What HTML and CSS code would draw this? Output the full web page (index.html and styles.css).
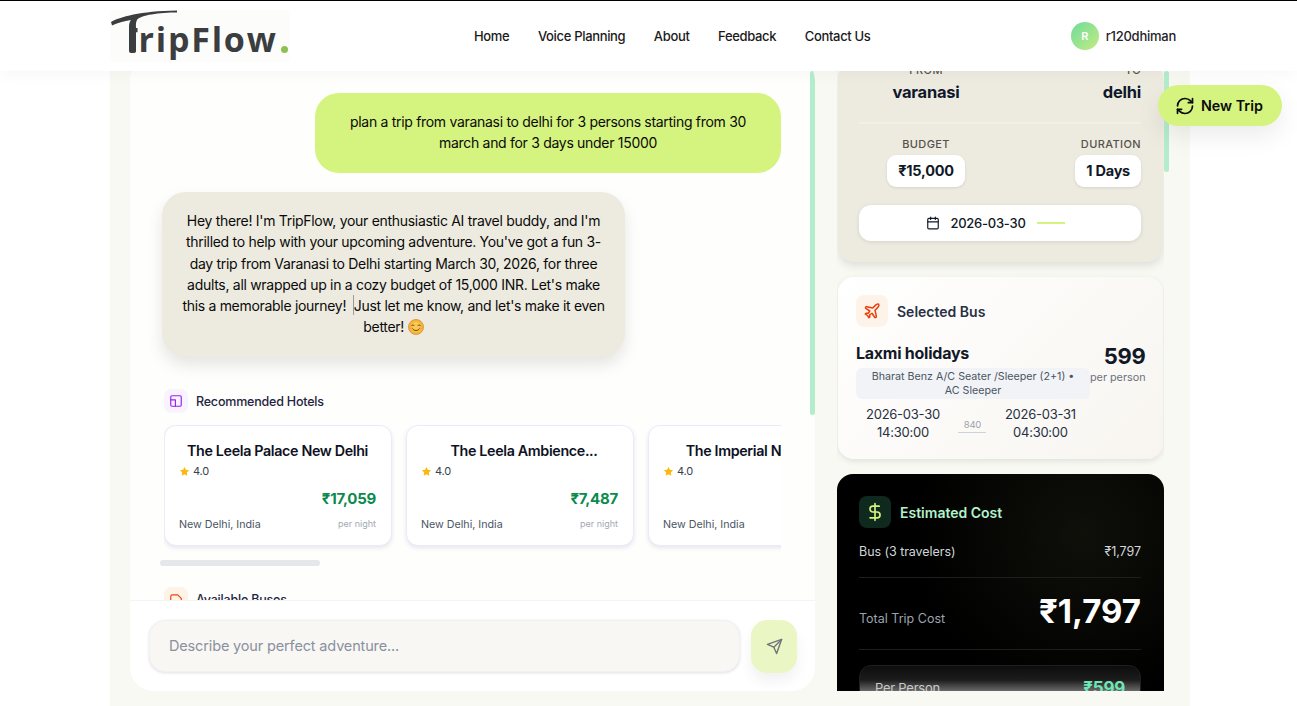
FILE: index.html
```html
<!DOCTYPE html>
<html lang="en">
<head>
<meta charset="UTF-8">
<meta name="viewport" content="width=device-width, initial-scale=1.0">
<title>TripFlow</title>
<link rel="stylesheet" href="styles.css">
</head>
<body>
  <header class="topbar">
    <a class="logo" href="#">
      <svg class="logo-swoosh" viewBox="0 0 70 45"><path d="M1 12C10 7 30 1 67 .5L67 2.5C50 2.5 30 5 27 10C25.5 12.5 26 16 26 18L26 41Q26 43 24 43L21 43Q19 43 19 41L19 17C19 13 20 11 21 10C14 11 7 13 2 15.5Z"/></svg>
      <span class="logo-text"><span class="logo-t">T</span>ripFlow</span><span class="logo-dot"></span>
    </a>
    <nav class="nav">
      <a href="#">Home</a>
      <a href="#">Voice Planning</a>
      <a href="#">About</a>
      <a href="#">Feedback</a>
      <a href="#">Contact Us</a>
    </nav>
    <div class="user">
      <span class="avatar">R</span>
      <span class="username">r120dhiman</span>
    </div>
  </header>

  <button class="new-trip">
    <svg class="icon" width="20" height="20" viewBox="0 0 24 24"><path d="M3 12a9 9 0 0 1 9-9 9.75 9.75 0 0 1 6.74 2.74L21 8"/><path d="M21 3v5h-5"/><path d="M21 12a9 9 0 0 1-9 9 9.75 9.75 0 0 1-6.74-2.74L3 16"/><path d="M8 16H3v5"/></svg>
    New Trip
  </button>

  <main class="page">
    <section class="chat">
      <div class="chat-scroll">
        <div class="msg msg-user">plan a trip from varanasi to delhi for 3 persons starting from 30 march and for 3 days under 15000</div>
        <div class="msg msg-ai">Hey there! I'm TripFlow, your enthusiastic AI travel buddy, and I'm thrilled to help with your upcoming adventure. You've got a fun 3-day trip from Varanasi to Delhi starting March 30, 2026, for three adults, all wrapped up in a cozy budget of 15,000 INR. Let's make this a memorable journey! <span class="cursor"></span>Just let me know, and let's make it even better!
          <svg class="emoji" viewBox="0 0 16 16"><circle cx="8" cy="8" r="7.5" fill="#f6b53c" stroke="#d98a1f" stroke-width=".8"/><circle cx="8" cy="8" r="5" fill="#fbc94f"/><path d="M3.6 6.6c.6-1 1.9-1 2.5 0M9.9 6.6c.6-1 1.9-1 2.5 0" fill="none" stroke="#5b3410" stroke-width=".9" stroke-linecap="round"/><path d="M4.2 9.4c1.6 2.9 6 2.9 7.6 0" fill="none" stroke="#5b3410" stroke-width=".9" stroke-linecap="round"/><circle cx="3.6" cy="9" r="1.2" fill="#f59a6a" opacity=".7"/><circle cx="12.4" cy="9" r="1.2" fill="#f59a6a" opacity=".7"/></svg>
        </div>

        <div class="section-head">
          <span class="section-icon section-icon-purple">
            <svg class="icon" width="14" height="14" viewBox="0 0 24 24"><rect x="3" y="3" width="18" height="18" rx="2"/><path d="M3 10h8v11"/></svg>
          </span>
          Recommended Hotels
        </div>

        <div class="hotels">
          <article class="hotel">
            <h3>The Leela Palace New Delhi</h3>
            <div class="rating"><svg width="11" height="11" viewBox="0 0 24 24"><polygon points="12 2 15.09 8.26 22 9.27 17 14.14 18.18 21.02 12 17.77 5.82 21.02 7 14.14 2 9.27 8.91 8.26 12 2"/></svg>4.0</div>
            <div class="hotel-price">₹17,059</div>
            <div class="hotel-foot"><span>New Delhi, India</span><small>per night</small></div>
          </article>
          <article class="hotel">
            <h3 class="hotel-cut">The Leela Ambience...</h3>
            <div class="rating"><svg width="11" height="11" viewBox="0 0 24 24"><polygon points="12 2 15.09 8.26 22 9.27 17 14.14 18.18 21.02 12 17.77 5.82 21.02 7 14.14 2 9.27 8.91 8.26 12 2"/></svg>4.0</div>
            <div class="hotel-price">₹7,487</div>
            <div class="hotel-foot"><span>New Delhi, India</span><small>per night</small></div>
          </article>
          <article class="hotel">
            <h3>The Imperial New Delhi</h3>
            <div class="rating"><svg width="11" height="11" viewBox="0 0 24 24"><polygon points="12 2 15.09 8.26 22 9.27 17 14.14 18.18 21.02 12 17.77 5.82 21.02 7 14.14 2 9.27 8.91 8.26 12 2"/></svg>4.0</div>
            <div class="hotel-price">₹9,200</div>
            <div class="hotel-foot"><span>New Delhi, India</span><small>per night</small></div>
          </article>
        </div>
        <div class="hotels-bar"></div>

        <div class="section-head section-head-buses">
          <span class="section-icon section-icon-orange">
            <svg class="icon" width="14" height="14" viewBox="0 0 24 24"><path d="M3 19V8a3 3 0 0 1 3-3h9l6 6v8"/></svg>
          </span>
          Available Buses
        </div>
      </div>

      <form class="composer">
        <input class="composer-input" type="text" placeholder="Describe your perfect adventure...">
        <button class="composer-send" type="button">
          <svg class="icon" width="17" height="17" viewBox="0 0 24 24"><path d="m22 2-7 20-4-9-9-4Z"/><path d="M22 2 11 13"/></svg>
        </button>
      </form>
      <span class="scroll-thumb scroll-thumb-chat"></span>
    </section>

    <aside class="side">
      <div class="side-scroll">
        <div class="card card-route">
          <div class="route-row">
            <div class="route-col route-center"><label>FROM</label><strong>varanasi</strong></div>
            <div class="route-col route-end"><label>TO</label><strong>delhi</strong></div>
          </div>
          <div class="route-row route-row-stats">
            <div class="route-col route-center"><label>BUDGET</label><b class="stat">₹15,000</b></div>
            <div class="route-col route-end"><label>DURATION</label><b class="stat">1 Days</b></div>
          </div>
          <div class="date-bar">
            <svg class="icon" width="14" height="14" viewBox="0 0 24 24"><path d="M8 2v4"/><path d="M16 2v4"/><rect x="3" y="4" width="18" height="18" rx="2"/><path d="M3 10h18"/></svg>
            <span>2026-03-30</span>
            <i class="date-line"></i>
          </div>
        </div>

        <div class="card card-bus">
          <div class="bus-head">
            <span class="bus-icon">
              <svg class="icon" width="18" height="18" viewBox="0 0 24 24"><path d="M17.8 19.2 16 11l3.5-3.5C21 6 21.5 4 21 3c-1-.5-3 0-4.5 1.5L13 8 4.8 6.2c-.5-.1-.9.1-1.1.5l-.3.5c-.2.5-.1 1 .3 1.3L9 12l-2 3H4l-1 1 3 2 2 3 1-1v-3l3-2 3.5 5.3c.3.4.8.5 1.3.3l.5-.2c.4-.3.6-.7.5-1.2z"/></svg>
            </span>
            Selected Bus
          </div>
          <div class="bus-body">
            <div class="bus-info">
              <div class="bus-name">Laxmi holidays</div>
              <div class="bus-type">Bharat Benz A/C Seater /Sleeper (2+1) • AC Sleeper</div>
            </div>
            <div class="bus-price"><b>599</b><span>per person</span></div>
          </div>
          <div class="bus-times">
            <div>2026-03-30<br>14:30:00</div>
            <div class="bus-duration">840</div>
            <div>2026-03-31<br>04:30:00</div>
          </div>
        </div>

        <div class="card card-cost">
          <div class="cost-head">
            <span class="cost-icon">
              <svg class="icon" width="20" height="20" viewBox="0 0 24 24"><line x1="12" y1="2" x2="12" y2="22"/><path d="M17 5H9.5a3.5 3.5 0 0 0 0 7h5a3.5 3.5 0 0 1 0 7H6"/></svg>
            </span>
            Estimated Cost
          </div>
          <div class="cost-row"><span>Bus (3 travelers)</span><span>₹1,797</span></div>
          <div class="cost-total"><span>Total Trip Cost</span><b>₹1,797</b></div>
          <div class="cost-person"><span>Per Person</span><b>₹599</b></div>
        </div>
      </div>
      <span class="scroll-thumb scroll-thumb-side"></span>
    </aside>
  </main>
</body>
</html>
```

FILE: styles.css
```css
* {
  box-sizing: border-box;
}
html, body {
  height: 100%;
}
body {
  margin: 0;
  height: 706px;
  overflow: hidden;
  background-color: #ffffff;
  font-family: Inter, "Liberation Sans", Arial, sans-serif;
  letter-spacing: -0.25px;
  color: #111827;
}
.icon {
  fill: none;
  stroke: currentColor;
  stroke-width: 2;
  stroke-linecap: round;
  stroke-linejoin: round;
  flex-shrink: 0;
}

/* header */
.topbar {
  position: relative;
  z-index: 5;
  display: flex;
  align-items: center;
  height: 71px;
  padding: 0 121px 0 110px;
  background-color: #ffffff;
  border-top: 1px solid #000000;
  box-shadow: 0 4px 14px rgba(0, 0, 0, 0.03);
}
.logo {
  position: relative;
  display: flex;
  align-items: flex-end;
  flex: 0 0 180px;
  height: 52px;
  padding: 0 0 0 13px;
  background-color: #fcfcfa;
  color: #3b3d3f;
  text-decoration: none;
}
.logo-swoosh {
  position: absolute;
  left: 0;
  top: 0;
  width: 70px;
  height: 45px;
  fill: #3b3d3f;
}
.logo-text {
  font-family: "Open Sans", Lato, sans-serif;
  font-size: 34px;
  font-weight: 700;
  line-height: 45px;
  letter-spacing: 1.8px;
  white-space: nowrap;
}
.logo-t {
  display: inline-block;
  margin-right: -6px;
  clip-path: inset(0 7px 0 7px);
}
.logo-dot {
  flex: none;
  width: 7px;
  height: 7px;
  margin: 0 0 9px 3px;
  border-radius: 50%;
  background-color: #8cc152;
}
.nav {
  display: flex;
  gap: 28.5px;
  margin-left: 184px;
}
.nav a {
  color: #1a1a1a;
  font-size: 13px;
  font-weight: 500;
  letter-spacing: -0.33px;
  text-decoration: none;
}
.user {
  display: flex;
  align-items: center;
  gap: 7px;
  margin-left: auto;
}
.avatar {
  display: flex;
  align-items: center;
  justify-content: center;
  width: 28px;
  height: 28px;
  border-radius: 50%;
  background: linear-gradient(135deg, #6edb9c, #c4ec80);
  color: #ffffff;
  font-size: 11px;
  font-weight: 600;
}
.username {
  color: #1f2328;
  font-size: 13px;
  font-weight: 500;
}

/* floating button */
.new-trip {
  position: absolute;
  z-index: 6;
  left: 1158px;
  top: 85px;
  display: flex;
  align-items: center;
  gap: 6px;
  width: 124px;
  height: 41px;
  padding: 0 0 0 17px;
  border: none;
  border-radius: 21px;
  background-color: #d5f37f;
  box-shadow: 0 10px 24px rgba(0, 0, 0, 0.08);
  color: #0b0b0b;
  font-family: inherit;
  font-size: 14.3px;
  font-weight: 600;
  letter-spacing: 0;
}

/* page */
.page {
  display: flex;
  gap: 22px;
  width: 1080px;
  height: 635px;
  margin-left: 110px;
  padding: 0 0 15px 20px;
  background-color: #f9f9f3;
}

/* chat column */
.chat {
  position: relative;
  display: flex;
  flex-direction: column;
  width: 685px;
  margin-top: -14px;
  border-radius: 24px;
  background-color: #ffffff;
  overflow: hidden;
}
.chat-scroll {
  flex: 1;
  min-height: 0;
  padding: 36px 34px 0 32px;
  background-color: #fefefc;
  overflow: hidden;
}
.msg {
  color: #0a0a0a;
  font-size: 14px;
  line-height: 21.3px;
  letter-spacing: -0.3px;
  text-align: center;
}
.msg-user {
  width: 466px;
  height: 80px;
  margin-left: 153px;
  padding: 18px 24px;
  border-radius: 24px;
  background-color: #d5f37f;
}
.msg-ai {
  width: 463px;
  height: 165px;
  margin-top: 19px;
  padding: 18px 18px;
  border-radius: 24px;
  background-color: #edeae0;
  box-shadow: 0 8px 16px rgba(0, 0, 0, 0.1);
}
.cursor {
  display: inline-block;
  width: 1px;
  height: 20px;
  margin: -2px 0 -2px 3px;
  vertical-align: -2px;
  background-color: #9b9b9b;
}
.emoji {
  width: 16px;
  height: 16px;
  vertical-align: -3px;
}
.section-head {
  display: flex;
  align-items: center;
  gap: 8px;
  margin: 32px 0 0 2px;
  color: #1f2540;
  font-size: 12.5px;
  font-weight: 500;
  letter-spacing: -0.2px;
}
.section-icon {
  display: flex;
  align-items: center;
  justify-content: center;
  width: 24px;
  height: 24px;
  border-radius: 7px;
}
.section-icon-purple {
  background-color: #f7f3ff;
  color: #9b22f0;
}
.section-icon-orange {
  background-color: #fff3e8;
  color: #e8470c;
}
.section-head-buses {
  margin-top: 21px;
}
.hotels {
  display: flex;
  gap: 14px;
  width: 617px;
  margin: 12px 0 0 2px;
  padding-bottom: 6px;
  overflow: hidden;
}
.hotel {
  flex: 0 0 228px;
  height: 121px;
  padding: 16px 15px 0 14px;
  border: 1px solid #ece9fb;
  border-radius: 12px;
  background-color: #ffffff;
  box-shadow: 0 2px 4px rgba(70, 60, 140, 0.13);
}
.hotel h3 {
  margin: 0;
  color: #0e1224;
  font-size: 14.3px;
  font-weight: 600;
  line-height: 18px;
  letter-spacing: -0.35px;
  text-align: center;
  white-space: nowrap;
}
.hotel h3.hotel-cut {
  padding-left: 9px;
}
.rating {
  display: flex;
  align-items: center;
  gap: 3px;
  margin-top: 4px;
  color: #374151;
  font-size: 11px;
  line-height: 14px;
}
.rating svg {
  fill: #fbb80f;
}
.hotel-price {
  margin-top: 11px;
  color: #0b8a4d;
  font-size: 15px;
  font-weight: 700;
  line-height: 20px;
  text-align: right;
}
.hotel-foot {
  display: flex;
  align-items: flex-start;
  justify-content: space-between;
  margin-top: 9px;
  color: #4b5563;
  font-size: 10.7px;
  line-height: 14px;
  letter-spacing: 0;
}
.hotel-foot small {
  margin-top: -1px;
  color: #a3a8b2;
  font-size: 9px;
}
.hotels-bar {
  width: 160px;
  height: 6px;
  margin-top: 8px;
  margin-left: -2px;
  border-radius: 3px;
  background-color: #e5e7eb;
}
.composer {
  display: flex;
  gap: 11px;
  height: 91px;
  padding: 19px 18px 0 19px;
  border-top: 1px solid #f5f4f0;
  background-color: #ffffff;
}
.composer-input {
  width: 591px;
  height: 52px;
  padding: 0 19px 2px;
  border: 1px solid #f1f0f3;
  border-radius: 16px;
  background-color: #f8f7f3;
  box-shadow: 0 1px 3px rgba(40, 40, 90, 0.14);
  color: #111827;
  font-family: inherit;
  font-size: 14.5px;
  letter-spacing: -0.15px;
}
.composer-input::placeholder {
  color: #8a90a0;
}
.composer-send {
  display: flex;
  align-items: center;
  justify-content: center;
  width: 46px;
  height: 53px;
  padding: 0;
  border: none;
  border-radius: 16px;
  background-color: #eaf7c4;
  box-shadow: 0 8px 14px rgba(0, 0, 0, 0.06);
  color: #72757c;
}
.scroll-thumb {
  position: absolute;
  width: 5px;
  border-radius: 3px;
  background-color: #b3edcb;
}
.scroll-thumb-chat {
  right: 0;
  top: 14px;
  height: 344px;
}
.scroll-thumb-side {
  right: -5px;
  top: 0;
  height: 101px;
}

/* side column */
.side {
  position: relative;
  width: 327px;
}
.side-scroll {
  height: 620px;
  overflow: hidden;
  padding: 0 1px;
}
.card {
  border-radius: 16px;
}
.card-route {
  height: 199px;
  padding: 0 22px 0 21px;
  background-color: #edeae0;
  box-shadow: 0 4px 8px rgba(0, 0, 0, 0.1);
}
.route-row {
  display: flex;
  justify-content: space-between;
  height: 61px;
  margin-top: -8px;
  border-bottom: 2px solid #f1efe8;
}
.route-row-stats {
  height: auto;
  margin-top: 13px;
  border-bottom: none;
}
.route-col {
  display: flex;
  flex-direction: column;
}
.route-center {
  align-items: center;
  width: 78px;
  margin-left: 28px;
}
.route-end {
  align-items: flex-end;
}
.route-col label {
  color: #55534c;
  font-size: 11px;
  font-weight: 500;
  letter-spacing: 0.4px;
  line-height: 14px;
}
.route-col strong {
  margin-top: 5px;
  color: #0f172a;
  font-size: 16.5px;
  font-weight: 700;
  line-height: 20px;
}
.stat {
  margin-top: 4px;
  padding: 0 11px;
  border-radius: 9px;
  background-color: #ffffff;
  box-shadow: 0 1px 3px rgba(0, 0, 0, 0.1);
  font-size: 14.5px;
  font-weight: 700;
  line-height: 32px;
}
.date-bar {
  display: flex;
  align-items: center;
  justify-content: center;
  gap: 10px;
  height: 36px;
  margin-top: 18px;
  padding-right: 9px;
  border-radius: 12px;
  background-color: #ffffff;
  box-shadow: 0 1px 4px rgba(0, 0, 0, 0.1);
  font-size: 13px;
  font-weight: 500;
}
.date-line {
  width: 28px;
  height: 2px;
  margin-left: 1px;
  background-color: #d5f37f;
}
.card-bus {
  height: 182px;
  margin-top: 15px;
  padding: 18px 18px 0;
  background: linear-gradient(135deg, #ffffff, #f8f5f0);
  box-shadow: 0 2px 6px rgba(0, 0, 0, 0.1);
}
.bus-head {
  display: flex;
  align-items: center;
  gap: 9px;
  color: #273044;
  font-size: 14px;
  font-weight: 600;
  letter-spacing: 0;
}
.bus-icon {
  display: flex;
  align-items: center;
  justify-content: center;
  width: 32px;
  height: 32px;
  border-radius: 8px;
  background-color: #fef3e9;
  color: #e8400c;
}
.bus-body {
  display: flex;
  justify-content: space-between;
  margin-top: 16px;
}
.bus-info {
  flex: 0 0 234px;
}
.bus-name {
  color: #111827;
  font-size: 16px;
  font-weight: 700;
  line-height: 20px;
}
.bus-type {
  margin-top: 5px;
  padding: 2px 14px;
  border-radius: 6px;
  background-color: #f2f3f6;
  color: #4b5563;
  font-size: 10.7px;
  line-height: 13.5px;
  letter-spacing: 0;
  text-align: center;
}
.bus-price {
  display: flex;
  flex: none;
  flex-direction: column;
  align-items: flex-end;
  white-space: nowrap;
}
.bus-price b {
  font-size: 22px;
  line-height: 26px;
}
.bus-price span {
  margin-top: 2px;
  color: #6b7280;
  font-size: 10.8px;
  letter-spacing: 0;
}
.bus-times {
  display: flex;
  align-items: center;
  gap: 18.5px;
  width: 234px;
  margin-top: 6px;
  padding-left: 10px;
  color: #273044;
  font-size: 13px;
  line-height: 18px;
  text-align: center;
}
.bus-duration {
  width: 28px;
  padding-top: 4px;
  border-bottom: 1px solid #cbd2de;
  color: #9ca3af;
  font-size: 9.5px;
  line-height: 14px;
}
.card-cost {
  height: 240px;
  margin: 15px -1px 0;
  padding: 22px 23px 0 22px;
  background: radial-gradient(circle at 75% 25%, #0f100a, #000000 55%);
  color: #ffffff;
  border-radius: 16px 16px 0 0;
}
.cost-head {
  display: flex;
  align-items: center;
  gap: 9px;
  color: #b3f2cb;
  font-size: 14px;
  font-weight: 600;
  letter-spacing: 0;
}
.cost-icon {
  display: flex;
  align-items: center;
  justify-content: center;
  width: 32px;
  height: 32px;
  border-radius: 8px;
  background-color: #10291f;
  color: #d5f37f;
}
.cost-row {
  display: flex;
  justify-content: space-between;
  height: 50px;
  padding-top: 16px;
  border-bottom: 1px solid #1e1e1e;
  color: #d1d5db;
  font-size: 12.5px;
  line-height: 16px;
  letter-spacing: -0.05px;
}
.cost-total {
  display: flex;
  align-items: center;
  justify-content: space-between;
  height: 72px;
  padding-top: 10px;
  border-bottom: 1px solid #1e1e1e;
  color: #9ca3af;
  font-size: 12.5px;
  letter-spacing: 0;
}
.cost-total b {
  margin-top: -16px;
  color: #ffffff;
  font-size: 33px;
  font-weight: 700;
}
.cost-person {
  display: flex;
  justify-content: space-between;
  height: 60px;
  margin-top: 15px;
  padding: 14px 15px 0;
  border: 1px solid #1f1f1f;
  border-radius: 12px;
  background: linear-gradient(#0d0d0d, #1c1c1c 14px, #707070 26px);
  color: #c9c9c9;
  font-size: 13px;
}
.cost-person b {
  margin-top: -2px;
  color: #6ee7b7;
  font-size: 17px;
}
```
